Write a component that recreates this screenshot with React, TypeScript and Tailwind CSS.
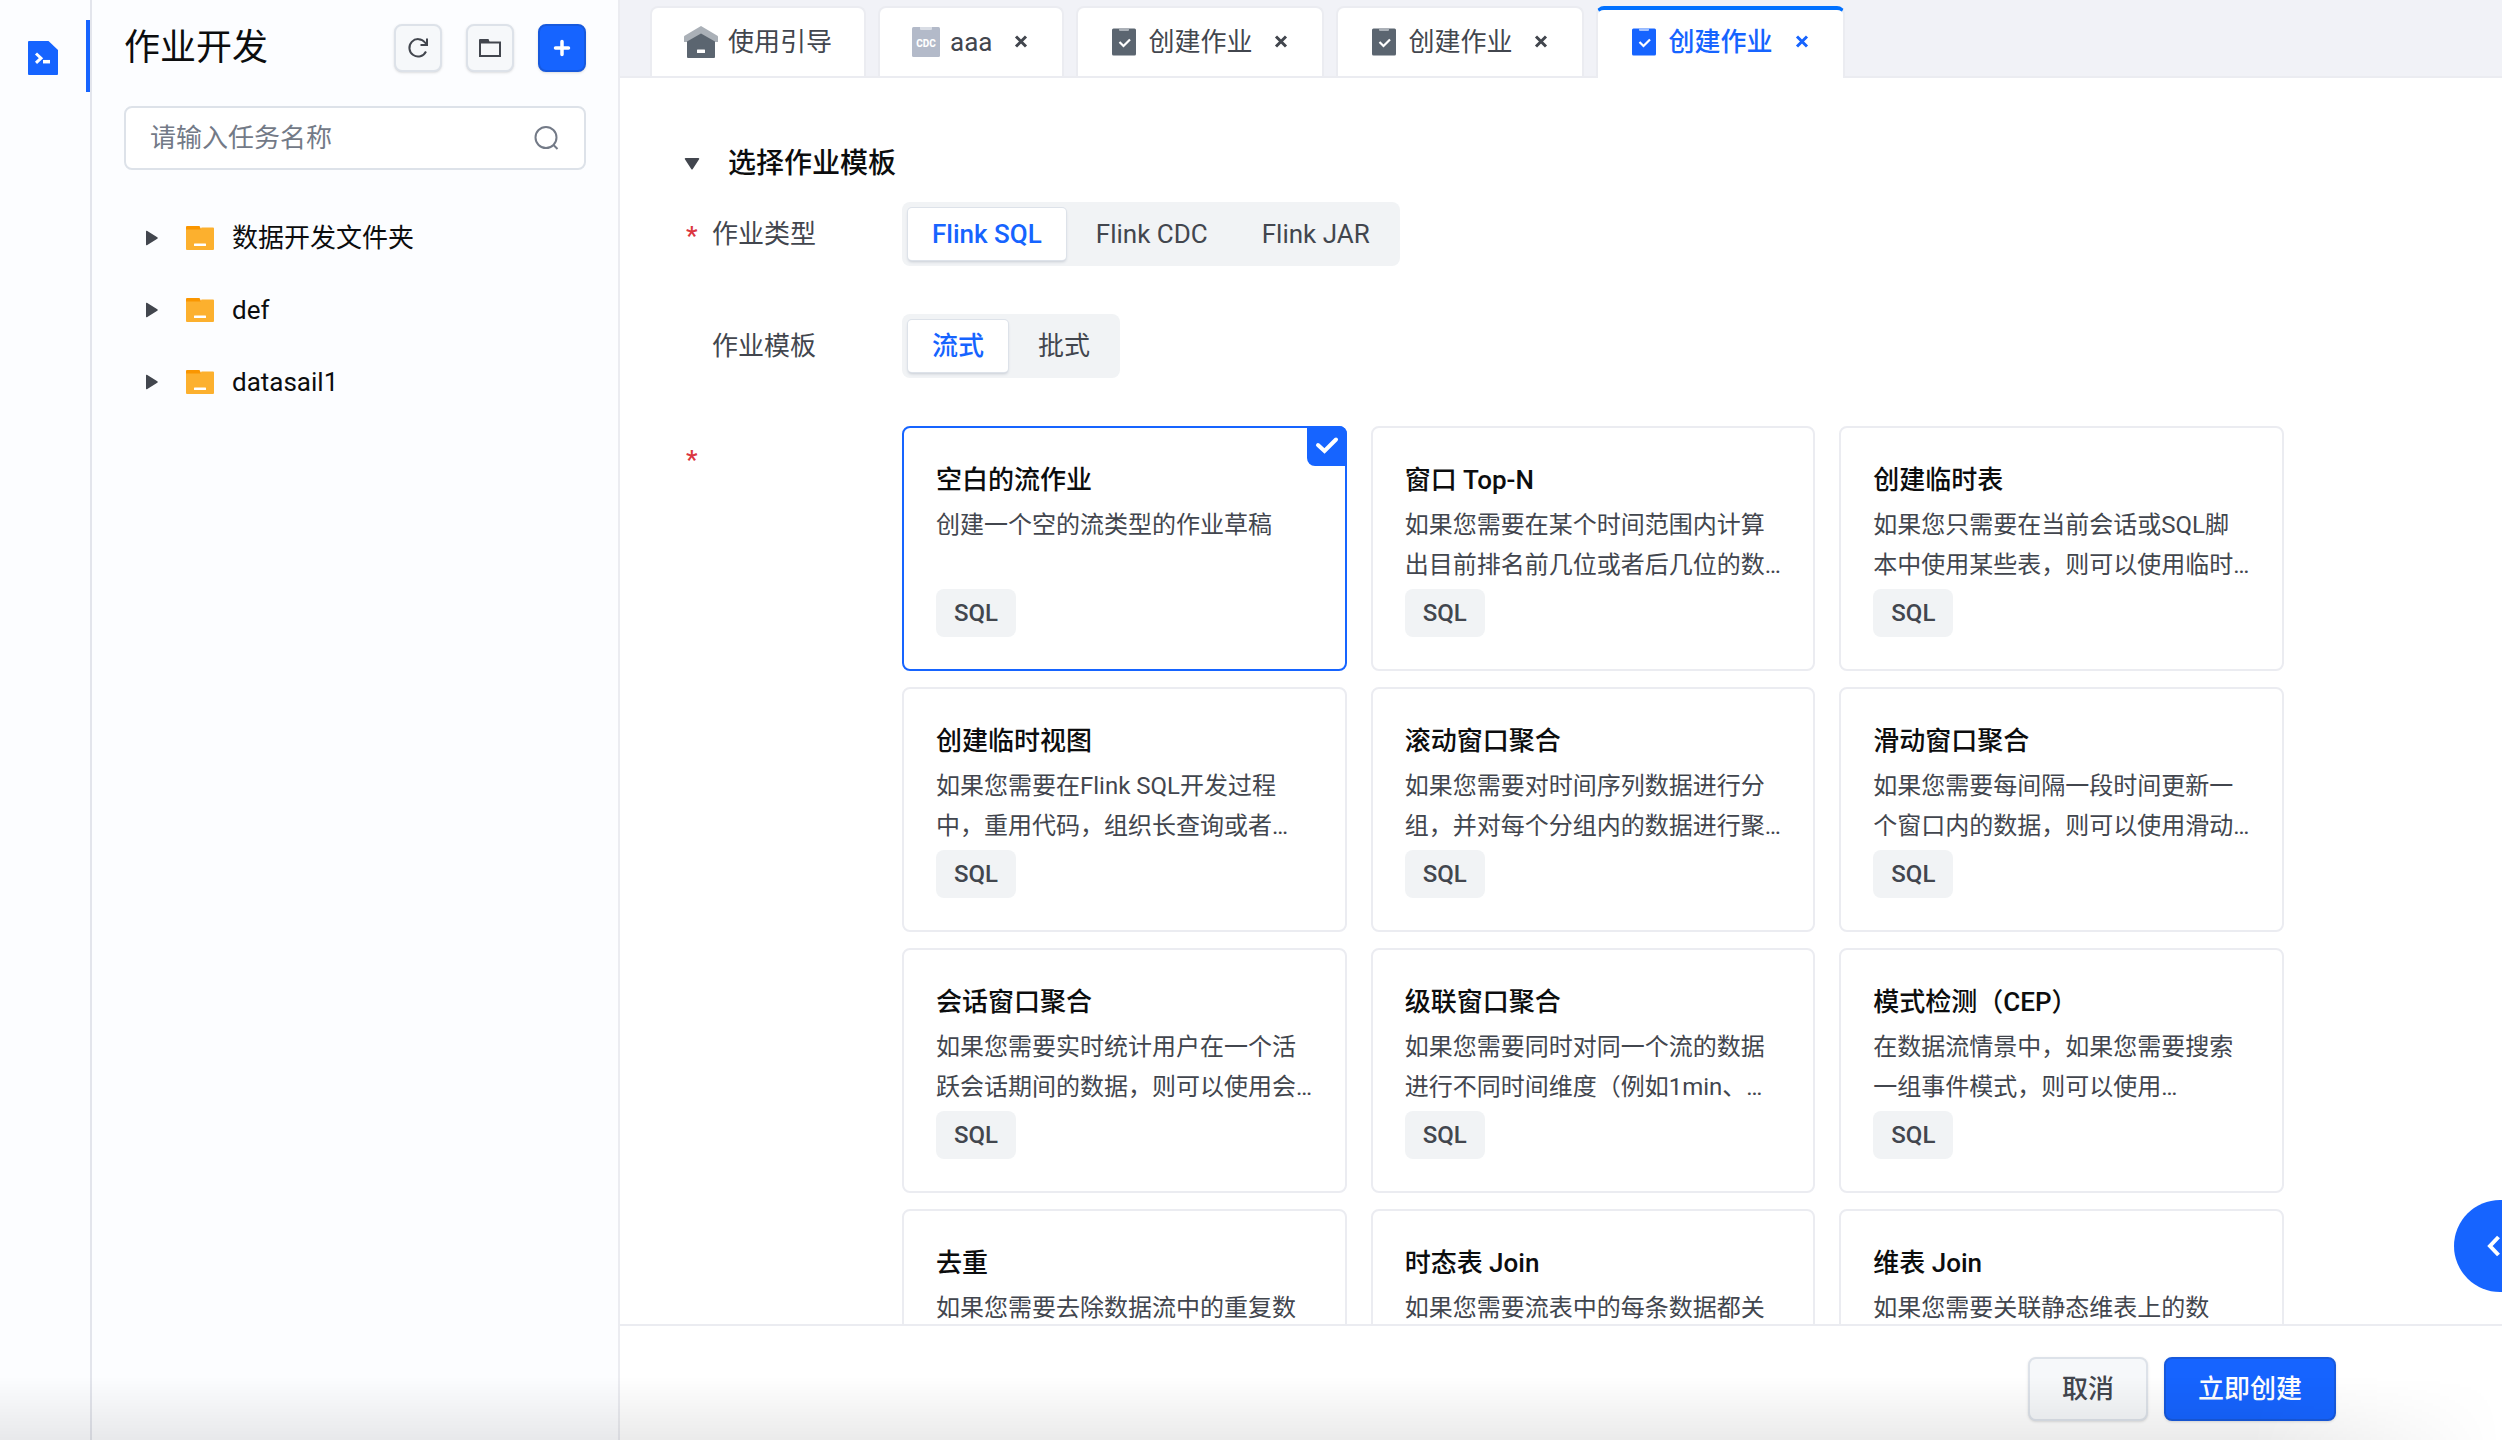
import { useState } from 'react';
import type { ReactNode } from 'react';
import clsx from 'clsx';

interface JobTemplate {
  title: string;
  desc: string;
}

interface TabItem {
  id: string;
  label: string;
  kind: 'guide' | 'cdc' | 'job';
}

const JOB_TYPES = ['Flink SQL', 'Flink CDC', 'Flink JAR'];
const JOB_MODES = ['流式', '批式'];
const FOLDERS = ['数据开发文件夹', 'def', 'datasail1'];

const TABS: TabItem[] = [
  { id: 'guide', label: '使用引导', kind: 'guide' },
  { id: 'aaa', label: 'aaa', kind: 'cdc' },
  { id: 'job-1', label: '创建作业', kind: 'job' },
  { id: 'job-2', label: '创建作业', kind: 'job' },
  { id: 'job-3', label: '创建作业', kind: 'job' },
];

const TEMPLATES: JobTemplate[] = [
  { title: '空白的流作业', desc: '创建一个空的流类型的作业草稿' },
  { title: '窗口 Top-N', desc: '如果您需要在某个时间范围内计算出目前排名前几位或者后几位的数…' },
  { title: '创建临时表', desc: '如果您只需要在当前会话或SQL脚本中使用某些表，则可以使用临时…' },
  { title: '创建临时视图', desc: '如果您需要在Flink SQL开发过程中，重用代码，组织长查询或者…' },
  { title: '滚动窗口聚合', desc: '如果您需要对时间序列数据进行分组，并对每个分组内的数据进行聚…' },
  { title: '滑动窗口聚合', desc: '如果您需要每间隔一段时间更新一个窗口内的数据，则可以使用滑动…' },
  { title: '会话窗口聚合', desc: '如果您需要实时统计用户在一个活跃会话期间的数据，则可以使用会…' },
  { title: '级联窗口聚合', desc: '如果您需要同时对同一个流的数据进行不同时间维度（例如1min、…' },
  { title: '模式检测（CEP）', desc: '在数据流情景中，如果您需要搜索一组事件模式，则可以使用…' },
  { title: '去重', desc: '如果您需要去除数据流中的重复数' },
  { title: '时态表 Join', desc: '如果您需要流表中的每条数据都关' },
  { title: '维表 Join', desc: '如果您需要关联静态维表上的数' },
];

function HomeIcon() {
  return (
    <svg width="34" height="34" viewBox="0 0 34 34" aria-hidden="true">
      <path d="M17 1 33 10.500a1.500 1.500 0 0 1 1 1.500v5H0v-5a1.500 1.500 0 0 1 1-1.500z" fill="#aab0b7" />
      <path d="M17 8.500 31 16.500V32a1 1 0 0 1-1 1H4a1 1 0 0 1-1-1V16.500z" fill="#5b6570" />
      <rect x="13" y="24.500" width="8" height="3.500" rx="0.500" fill="#fff" />
    </svg>
  );
}

function CdcIcon() {
  return (
    <svg width="28" height="32" viewBox="0 0 28 32" aria-hidden="true">
      <rect y="1" width="28" height="30" rx="1.500" fill="#b3bac9" />
      <path d="M8 1h12v2a1 1 0 0 1-1 1H9a1 1 0 0 1-1-1z" fill="#d9dde5" />
      <text x="14" y="20.500" textAnchor="middle" fontSize="10" fontWeight="800" fill="#fff">CDC</text>
    </svg>
  );
}

function JobIcon({ active }: { active: boolean }) {
  return (
    <svg width="28" height="28" viewBox="-2 0 28 28" aria-hidden="true">
      <rect width="24" height="27" y="0.500" rx="1.500" fill={active ? '#1664ff' : '#5b6570'} />
      <path d="M7 0.500h10v1.500a1 1 0 0 1-1 1H8a1 1 0 0 1-1-1z" fill={active ? '#a2c1ff' : '#aab0b7'} />
      <path d="m7.500 14 4 4 6.500-6.500" fill="none" stroke="#fff" strokeWidth="2.200" />
    </svg>
  );
}

function FolderIcon() {
  return (
    <svg width="28" height="24" viewBox="0 0 28 24" aria-hidden="true">
      <path d="M0 1a1 1 0 0 1 1-1h12.500l2 4H0z" fill="#fa9600" />
      <path d="M0 3.500h14.500l1-2H27a1 1 0 0 1 1 1V23a1 1 0 0 1-1 1H1a1 1 0 0 1-1-1z" fill="#fcb02e" />
      <rect x="8" y="17.500" width="12" height="2.500" rx="0.500" fill="#fff" />
    </svg>
  );
}

function IconButton({ label, primary, children }: { label: string; primary?: boolean; children: ReactNode }) {
  return (
    <button
      aria-label={label}
      className={clsx(
        'flex size-12 items-center justify-center rounded-lg border-2 shadow-sm',
        primary ? 'border-[#1759dd] bg-[#1664ff] text-white' : 'border-[#dde2e9] bg-[#f6f8fa] text-[#42464e]'
      )}
    >
      {children}
    </button>
  );
}

interface SegmentedProps {
  label: string;
  options: string[];
  value: string;
  onChange: (value: string) => void;
}

function Segmented({ label, options, value, onChange }: SegmentedProps) {
  return (
    <div role="group" aria-label={label} className="flex h-16 gap-1.5 rounded-lg bg-[#f1f3f5] p-1.5">
      {options.map((opt) => (
        <button
          key={opt}
          aria-pressed={opt === value}
          onClick={() => onChange(opt)}
          className={clsx(
            'rounded-sm px-6',
            opt === value
              ? 'bg-white font-medium text-[#1664ff] shadow-[0_0_0_1px_#dde2e9,0_2px_3px_#c7ccd4]'
              : 'text-[#42464e]'
          )}
        >
          {opt}
        </button>
      ))}
    </div>
  );
}

function TemplateCard({ template, selected, onSelect }: { template: JobTemplate; selected: boolean; onSelect: () => void }) {
  return (
    <button
      aria-pressed={selected}
      onClick={onSelect}
      className={clsx(
        'relative flex flex-col items-start rounded-lg border-2 bg-white p-8 text-left',
        selected ? 'border-[#1664ff]' : 'border-[#ebecf1]'
      )}
    >
      <span className="mb-[5px] leading-10 font-medium text-[#0c0d0e]">{template.title}</span>
      <span className="mb-1 h-20 overflow-hidden text-2xl leading-10 text-[#42464e]">{template.desc}</span>
      <span className="flex h-12 w-20 items-center justify-center rounded-lg bg-[#f1f3f5] text-2xl font-medium text-[#42464e]">
        SQL
      </span>
      {selected && (
        <span className="absolute -top-0.5 -right-0.5 flex size-10 items-center justify-center rounded-tr-lg rounded-bl-lg bg-[#1664ff]">
          <svg width="24" height="20" viewBox="0 0 24 20" fill="none" stroke="#fff" strokeWidth="4" strokeLinecap="round" aria-hidden="true">
            <path d="m3 9 6.500 6L21 3.500" />
          </svg>
        </span>
      )}
    </button>
  );
}

function Sidebar() {
  return (
    <aside className="flex w-[528px] shrink-0 flex-col border-r-2 border-[#ebecf1] pt-6 pr-8 pl-8">
      <div className="flex items-center gap-6">
        <h1 className="mr-auto text-4xl leading-12 text-[#0c0d0e]">作业开发</h1>
        <IconButton label="刷新">
          <svg width="24" height="24" viewBox="0 0 24 24" fill="none" stroke="currentColor" strokeWidth="2" aria-hidden="true">
            <path d="M20 15.500A8.700 8.700 0 1 1 19 6.500L21 9M21 2.500V9h-6.500" />
          </svg>
        </IconButton>
        <IconButton label="新建文件夹">
          <svg width="24" height="24" viewBox="0 0 24 24" fill="none" stroke="currentColor" strokeWidth="2" aria-hidden="true">
            <path d="M2 6.500h20v13.500H2z" />
            <path d="M1 4a1 1 0 0 1 1-1h8.500l1.500 4H1z" fill="currentColor" stroke="none" />
          </svg>
        </IconButton>
        <IconButton label="新建作业" primary>
          <svg width="20" height="20" viewBox="0 0 20 20" fill="none" stroke="currentColor" strokeWidth="3.500" strokeLinecap="round" aria-hidden="true">
            <path d="M10 3.500v13M3.500 10h13" />
          </svg>
        </IconButton>
      </div>

      <label className="mt-[34px] flex h-16 items-center rounded-lg border-2 border-[#dde2e9] bg-white pr-6 pl-6">
        <input
          type="text"
          aria-label="任务名称"
          placeholder="请输入任务名称"
          className="min-w-0 flex-1 text-[#0c0d0e] outline-none placeholder:text-[#737a87]"
        />
        <svg width="28" height="28" viewBox="0 0 28 28" fill="none" stroke="#737a87" strokeWidth="2" aria-hidden="true">
          <circle cx="14" cy="13.500" r="10.500" />
          <path d="m21.500 21 4 4" />
        </svg>
      </label>

      <ul className="mt-8">
        {FOLDERS.map((name) => (
          <li key={name}>
            <button className="flex h-18 w-full items-center pl-[22px] text-[#0c0d0e]">
              <svg width="12" height="16" viewBox="0 0 12 16" fill="#42464e" aria-hidden="true">
                <path d="M0 1.500v13a.8.8 0 0 0 1.300.6l10-6.400a.8.8 0 0 0 0-1.400l-10-6.400A.8.8 0 0 0 0 1.500z" />
              </svg>
              <span className="mr-[18px] ml-7">
                <FolderIcon />
              </span>
              {name}
            </button>
          </li>
        ))}
      </ul>
    </aside>
  );
}

function TabBar({ activeId, onChange }: { activeId: string; onChange: (id: string) => void }) {
  return (
    <nav className="flex h-[78px] shrink-0 items-end gap-3 border-b-2 border-[#ebecf1] bg-[#f1f2f7] pl-[30px]">
      {TABS.map((tab) => {
        const active = tab.id === activeId;
        return (
          <div
            key={tab.id}
            className={clsx(
              'flex items-center rounded-t-lg border-x-2 border-[#ebecf1] bg-white px-8',
              active
                ? '-mb-0.5 h-[72px] border-t-4 border-t-[#0070ff] pb-1 font-medium text-[#1664ff]'
                : 'h-[70px] border-t-2 text-[#42464e]'
            )}
          >
            <button onClick={() => onChange(tab.id)} className="flex items-center gap-2.5">
              {tab.kind === 'guide' && <HomeIcon />}
              {tab.kind === 'cdc' && <CdcIcon />}
              {tab.kind === 'job' && <JobIcon active={active} />}
              {tab.label}
            </button>
            {tab.kind !== 'guide' && (
              <button aria-label="关闭" className="ml-5">
                <svg width="18" height="16" viewBox="0 0 18 16" fill="none" stroke="currentColor" strokeWidth="3" aria-hidden="true">
                  <path d="m4 2.500 10 10M14 2.500 4 12.500" />
                </svg>
              </button>
            )}
          </div>
        );
      })}
    </nav>
  );
}

export default function App() {
  const [activeTab, setActiveTab] = useState('job-3');
  const [jobType, setJobType] = useState('Flink SQL');
  const [jobMode, setJobMode] = useState('流式');
  const [selected, setSelected] = useState('空白的流作业');

  return (
    <div className="relative flex h-screen overflow-hidden bg-[#fcfdff] font-[Roboto,'Noto_Sans_CJK_SC',sans-serif] text-[26px] leading-10">
      {/* Icon rail */}
      <nav className="flex w-[92px] shrink-0 flex-col border-r-2 border-[#e3e5ec] pt-5">
        <button aria-label="作业开发" className="flex h-18 items-center rounded-l-sm border-r-4 border-[#1664ff] pt-1 pl-7">
          <svg width="30" height="34" viewBox="0 0 30 34" aria-hidden="true">
            <path d="M1 0h19.500L30 9v24a1 1 0 0 1-1 1H1a1 1 0 0 1-1-1V1a1 1 0 0 1 1-1z" fill="#1664ff" />
            <path d="m8 12.500 5 4.700-5 4.700" fill="none" stroke="#fff" strokeWidth="3" />
            <path d="M15 20.700h7" stroke="#fff" strokeWidth="3.500" />
          </svg>
        </button>
      </nav>

      <Sidebar />

      <div className="flex min-w-0 flex-1 flex-col bg-white">
        <TabBar activeId={activeTab} onChange={setActiveTab} />

        <main className="min-h-0 flex-1 overflow-y-auto pt-[66px] pr-[218px] pl-16 [scrollbar-width:none]">
          <h2 className="flex h-10 items-center gap-7 text-[28px] font-medium text-[#0c0d0e]">
            <svg width="16" height="12" viewBox="0 0 16 12" fill="#42464e" aria-hidden="true">
              <path d="M1.500 0h13a.8.8 0 0 1 .6 1.300l-6.500 9.900a.8.8 0 0 1-1.200 0L.9 1.300A.8.8 0 0 1 1.500 0z" />
            </svg>
            选择作业模板
          </h2>

          <div className="mt-[18px] grid grid-cols-[218px_minmax(0,1fr)] gap-y-12">
            <div className="flex h-16 items-center text-[#42464e]">
              <span className="w-7 pt-1 pl-0.5 font-medium text-[#db373f]">*</span>
              作业类型
            </div>
            <div className="flex">
              <Segmented label="作业类型" options={JOB_TYPES} value={jobType} onChange={setJobType} />
            </div>

            <div className="flex h-16 items-center pl-7 text-[#42464e]">作业模板</div>
            <div className="flex">
              <Segmented label="作业模板" options={JOB_MODES} value={jobMode} onChange={setJobMode} />
            </div>

            <div className="flex h-16 items-center pt-1 pl-0.5 font-medium text-[#db373f]">*</div>
            <div className="grid grid-cols-3 gap-x-6 gap-y-4">
              {TEMPLATES.map((tpl) => (
                <TemplateCard
                  key={tpl.title}
                  template={tpl}
                  selected={selected === tpl.title}
                  onSelect={() => setSelected(tpl.title)}
                />
              ))}
            </div>
          </div>
        </main>

        <footer className="flex h-[116px] shrink-0 items-start justify-end gap-4 border-t-2 border-[#ebecf1] pt-[31px] pr-[166px]">
          <button className="h-16 rounded-lg border-2 border-[#dde2e9] bg-[#f6f8fa] px-8 font-medium text-[#42464e] shadow-sm">取消</button>
          <button className="h-16 rounded-lg border-2 border-[#1759dd] bg-[#1664ff] px-8 font-medium text-white shadow-sm">立即创建</button>
        </footer>
      </div>

      {/* Drawer handle, half outside the window */}
      <button
        aria-label="展开"
        className="absolute -right-11 bottom-[148px] flex size-[92px] items-center rounded-full bg-[#1664ff] pl-8 text-white"
      >
        <svg width="16" height="24" viewBox="0 0 16 24" fill="none" stroke="currentColor" strokeWidth="4" aria-hidden="true">
          <path d="m12.500 3-8.500 9 8.500 9" />
        </svg>
      </button>

      {/* Bottom shade */}
      <div className="pointer-events-none absolute inset-x-0 bottom-0 h-16 bg-linear-to-t from-black/8 to-transparent mask-r-from-90%" />
    </div>
  );
}
